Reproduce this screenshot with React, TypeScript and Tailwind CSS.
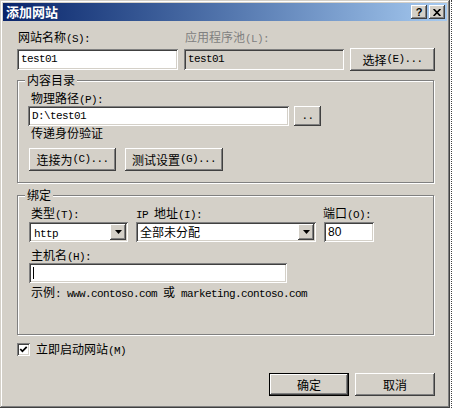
import type { ReactNode } from 'react'

const raised =
  'shadow-[inset_-1px_-1px_0_#404040,inset_1px_1px_0_#ffffff,inset_-2px_-2px_0_#808080,inset_2px_2px_0_#d4d0c8]'
const sunken =
  'shadow-[inset_1px_1px_0_#808080,inset_-1px_-1px_0_#ffffff,inset_2px_2px_0_#404040,inset_-2px_-2px_0_#d4d0c8]'

// SimSun-like mix: CJK in Noto, ASCII runs in a narrow mono
function Txt({ s }: { s: string }) {
  const parts = s.split(/([\x20-\x7e]+)/).filter(Boolean)
  return (
    <>
      {parts.map((part, i) =>
        /^[\x20-\x7e]+$/.test(part) ? (
          <span
            key={i}
            className="whitespace-pre font-['Liberation_Mono',monospace] text-[11px] leading-none tracking-[-0.6px]"
          >
            {part}
          </span>
        ) : (
          <span key={i}>{part}</span>
        ),
      )}
    </>
  )
}

function Line({ children, className = '' }: { children: ReactNode; className?: string }) {
  return <div className={`h-[14px] whitespace-nowrap leading-[14px] ${className}`}>{children}</div>
}

function Btn({
  children,
  className = '',
  isDefault = false,
}: {
  children: ReactNode
  className?: string
  isDefault?: boolean
}) {
  return (
    <button
      type="button"
      className={`flex shrink-0 items-center justify-center bg-[#d4d0c8] leading-[14px] text-black ${
        isDefault ? 'border border-black' : ''
      } ${className}`}
    >
      <span className={`flex h-full w-full items-center justify-center ${raised}`}>
        {children}
      </span>
    </button>
  )
}

function Field({
  children,
  className = '',
  disabled = false,
}: {
  children?: ReactNode
  className?: string
  disabled?: boolean
}) {
  return (
    <div
      className={`flex h-[20px] shrink-0 items-center pl-[4px] ${
        disabled ? 'bg-[#d4d0c8]' : 'bg-white'
      } ${sunken} ${className}`}
    >
      {children}
    </div>
  )
}

function Select({ children, className = '' }: { children: ReactNode; className?: string }) {
  return (
    <div className={`flex h-[20px] shrink-0 bg-white p-[2px] ${sunken} ${className}`}>
      <div className="flex flex-1 items-center pl-[2px]">{children}</div>
      <div className={`flex w-[16px] items-center justify-center bg-[#d4d0c8] ${raised}`}>
        <svg width="7" height="4" viewBox="0 0 7 4">
          <path d="M0 0h7L3.5 4z" fill="#000" />
        </svg>
      </div>
    </div>
  )
}

function TitleBtn({ children }: { children: ReactNode }) {
  return (
    <div className={`flex h-[14px] w-[16px] items-center justify-center bg-[#d4d0c8] ${raised}`}>
      {children}
    </div>
  )
}

const groupClass =
  'w-[417px] border border-[#808080] px-[11px] pt-[4px] shadow-[inset_1px_1px_0_#ffffff,1px_1px_0_#ffffff]'

export default function App() {
  return (
    <div className="h-[411px] w-[455px] overflow-hidden bg-white font-['Noto_Sans_CJK_SC',sans-serif] text-[12px] leading-[14px] text-black">
      <div className="flex">
        <div className="flex h-[408px] w-[450px] flex-col bg-[#d4d0c8] p-[3px] shadow-[inset_-1px_-1px_0_#404040,inset_1px_1px_0_#d4d0c8,inset_-2px_-2px_0_#808080,inset_2px_2px_0_#ffffff]">
          {/* title bar */}
          <div className="flex h-[18px] items-center justify-between bg-linear-to-r from-[#0a246a] to-[#a6caf0] pl-[3px] pr-[2px]">
            <span className="text-[13px] font-bold leading-[18px] text-white">添加网站</span>
            <div className="flex gap-[2px]">
              <TitleBtn>
                <span className="font-['Liberation_Sans',sans-serif] text-[11px] font-bold leading-[11px]">
                  ?
                </span>
              </TitleBtn>
              <TitleBtn>
                <svg width="8" height="7" viewBox="0 0 8 7">
                  <path d="M0.6 0L7.4 7M7.4 0L0.6 7" stroke="#000" strokeWidth="1.7" />
                </svg>
              </TitleBtn>
            </div>
          </div>

          <div className="pl-[14px] pr-[12px] pt-[9px]">
            {/* site name / app pool */}
            <div className="flex gap-[6px]">
              <Line className="w-[161px] pl-[1px]">
                <Txt s="网站名称(S):" />
              </Line>
              <Line className="w-[160px] pl-[1px] text-[#808080]">
                <Txt s="应用程序池(L):" />
              </Line>
            </div>
            <div className="mt-[4px] flex items-center gap-[6px]">
              <Field className="h-[21px] w-[161px]">
                <Txt s="test01" />
              </Field>
              <Field className="h-[21px] w-[160px]" disabled>
                <Txt s="test01" />
              </Field>
              <Btn className="h-[23px] w-[85px]">
                <Txt s="选择(E)..." />
              </Btn>
            </div>

            {/* content directory */}
            <fieldset className={`mt-[2px] pb-[11px] ${groupClass}`}>
              <legend className="-ml-[4px] h-[14px] bg-[#d4d0c8] px-[2px] leading-[14px]">内容目录</legend>
              <Line className="pl-[2px]">
                <Txt s="物理路径(P):" />
              </Line>
              <div className="-ml-[1px] mt-[1px] flex gap-[5px]">
                <Field className="w-[261px]">
                  <Txt s="D:\test01" />
                </Field>
                <Btn className="h-[20px] w-[27px]">
                  <Txt s=".." />
                </Btn>
              </div>
              <Line className="pl-[2px]">传递身份验证</Line>
              <div className="mt-[8px] flex gap-[9px]">
                <Btn className="h-[23px] w-[87px]">
                  <Txt s="连接为(C)..." />
                </Btn>
                <Btn className="h-[23px] w-[98px]">
                  <Txt s="测试设置(G)..." />
                </Btn>
              </div>
            </fieldset>

            {/* binding */}
            <fieldset className={`mt-[5px] pb-[35px] ${groupClass}`}>
              <legend className="-ml-[4px] h-[14px] bg-[#d4d0c8] px-[2px] leading-[14px]">绑定</legend>
              <div className="flex gap-[8px]">
                <Line className="w-[99px] pl-[2px]">
                  <Txt s="类型(T):" />
                </Line>
                <Line className="w-[180px]">
                  <Txt s="IP 地址(I):" />
                </Line>
                <Line className="-ml-[1px] w-[50px]">
                  <Txt s="端口(O):" />
                </Line>
              </div>
              <div className="mt-[2px] flex gap-[8px]">
                <Select className="w-[99px]">
                  <span className="pl-[1px]">
                    <Txt s="http" />
                  </span>
                </Select>
                <Select className="w-[180px]">全部未分配</Select>
                <Field className="w-[50px] pl-[2px] font-['Liberation_Sans',sans-serif]">80</Field>
              </div>
              <Line className="mt-[6px] pl-[2px]">
                <Txt s="主机名(H):" />
              </Line>
              <Field className="mt-[1px] w-[258px] pl-[2px]">
                <div className="h-[12px] w-[1px] bg-black" />
              </Field>
              <Line className="mt-[2px] pl-[2px]">
                <Txt s="示例: www.contoso.com " />
                或
                <Txt s=" marketing.contoso.com" />
              </Line>
            </fieldset>

            {/* start now */}
            <div className="mt-[7px] flex h-[14px] items-center gap-[6px]">
              <div className={`flex h-[13px] w-[13px] items-center justify-center bg-white ${sunken}`}>
                <svg width="13" height="13" viewBox="0 0 13 13">
                  <path d="M3.3 6L5.4 8.3L9.7 3.8" stroke="#000" strokeWidth="1.8" fill="none" />
                </svg>
              </div>
              <Line>
                <Txt s="立即启动网站(M)" />
              </Line>
            </div>

            <div className="mt-[17px] flex justify-end gap-[6px]">
              <Btn className="h-[23px] w-[80px]" isDefault>
                确定
              </Btn>
              <Btn className="h-[23px] w-[80px]">取消</Btn>
            </div>
          </div>
        </div>
        <div className="ml-[1px] h-[408px] w-[1px] border-l border-dotted border-[#404040]" />
      </div>
    </div>
  )
}
